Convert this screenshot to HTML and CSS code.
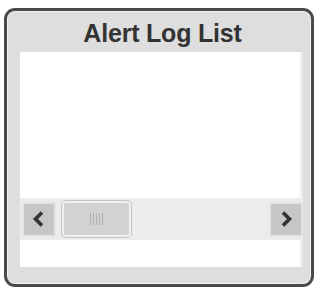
FILE: index.html
```html
<!DOCTYPE html>
<html>
<head>
<meta charset="utf-8">
<link rel="stylesheet" href="styles.css">
</head>
<body>
<div class="frame">
  <div class="title">Alert Log List</div>
  <div class="panel">
    <div class="list"></div>
    <div class="scrollbar">
      <div class="btn">
        <svg width="16" height="18" viewBox="0 0 16 18"><path d="M11 2.5 L4.5 9 L11 15.5" fill="none" stroke="#333" stroke-width="3.6" stroke-linecap="butt" stroke-linejoin="miter"/></svg>
      </div>
      <div class="thumb"><span class="grip"></span></div>
      <div class="spacer"></div>
      <div class="btn">
        <svg width="16" height="18" viewBox="0 0 16 18"><path d="M5 2.5 L11.5 9 L5 15.5" fill="none" stroke="#333" stroke-width="3.6" stroke-linecap="butt" stroke-linejoin="miter"/></svg>
      </div>
    </div>
    <div class="footer"></div>
  </div>
</div>
</body>
</html>
```
FILE: styles.css
```css
html, body {
  margin: 0;
  padding: 0;
  background: #ffffff;
}
body {
  font-family: "Liberation Sans", Arial, sans-serif;
}
.frame {
  box-sizing: border-box;
  margin: 8px 0 0 4px;
  width: 310px;
  height: 279px;
  border: 3px solid #4a4a4a;
  border-radius: 11px;
  background: #dedede;
  padding: 0 8px 17px 13px;
  display: flex;
  flex-direction: column;
  box-shadow: inset 0 0 0 1px #f2f2f2;
}
.title {
  height: 41px;
  line-height: 41px;
  padding-top: 2px;
  box-sizing: border-box;
  text-align: center;
  font-weight: bold;
  font-size: 25px;
  color: #333333;
  padding-left: 2px;
  letter-spacing: -0.2px;
}
.panel {
  flex: 1;
  background: #ffffff;
  display: flex;
  flex-direction: column;
  box-shadow: inset -4px 0 4px -3px #d8d8d8;
}
.list {
  flex: 1;
}
.scrollbar {
  height: 42px;
  background: #ececec;
  display: flex;
  align-items: center;
  padding: 0 0 0 2px;
}
.btn {
  box-sizing: border-box;
  width: 34px;
  height: 35px;
  background: #c6c6c6;
  border: 2px solid #e4e4e4;
  border-radius: 3px;
  display: flex;
  align-items: center;
  justify-content: center;
}
.thumb {
  box-sizing: border-box;
  margin-left: 6px;
  width: 69px;
  height: 36px;
  background: #d2d2d2;
  border: 2px solid #f0f0f0;
  border-radius: 4px;
  box-shadow: 0 0 0 1px #c4c4c4;
  display: flex;
  align-items: center;
  justify-content: center;
}
.grip {
  width: 14px;
  height: 12px;
  background: repeating-linear-gradient(to right, #b0b0b0 0 1px, transparent 1px 3px);
}
.spacer {
  flex: 1;
}
.footer {
  height: 27px;
}
```
